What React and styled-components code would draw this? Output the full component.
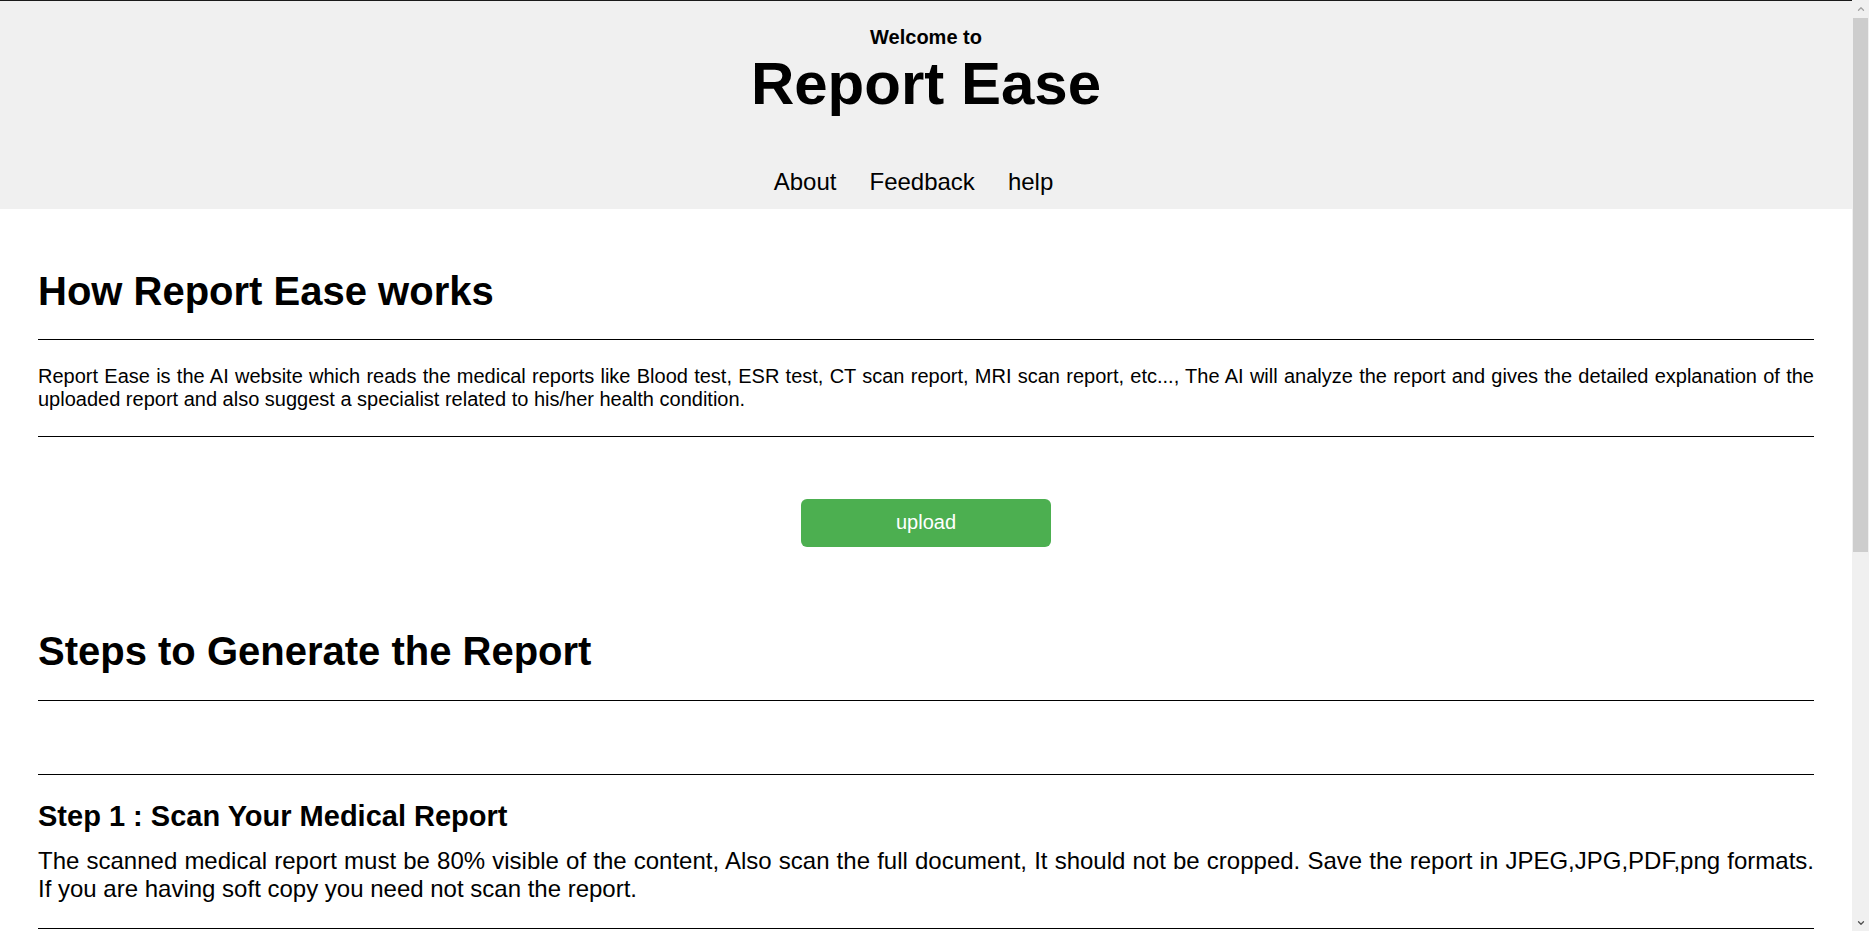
import React from 'react';
import styled, { createGlobalStyle } from 'styled-components';
import { ChevronUp, ChevronDown } from 'lucide-react';

const GlobalStyle = createGlobalStyle`
  html, body {
    margin: 0;
    padding: 0;
    background: #fff;
    font-family: "Liberation Sans", Arial, sans-serif;
    color: #000;
  }
  body {
    padding-right: 17px;
  }
`;

const steps = [
  {
    title: 'Step 1 : Scan Your Medical Report',
    text: 'The scanned medical report must be 80% visible of the content, Also scan the full document, It should not be cropped. Save the report in JPEG,JPG,PDF,png formats. If you are having soft copy you need not scan the report.',
  },
  {
    title: 'Step 2 : Upload the Report',
    text: 'Click the upload button and choose the scanned report or the soft copy from your device. Wait until the report is uploaded completely.',
  },
  {
    title: 'Step 3 : Get the Explanation',
    text: 'The AI will read the uploaded report and gives the detailed explanation of the report along with a specialist suggestion related to your health condition.',
  },
];

const App = () => {
  return (
    <Page>
      <GlobalStyle />
      <Header>
        <Header.Welcome>Welcome to</Header.Welcome>
        <Header.Title>Report Ease</Header.Title>
        <Nav>
          <Nav.Link href="#">About</Nav.Link>
          <Nav.Link href="#">Feedback</Nav.Link>
          <Nav.Link href="#">help</Nav.Link>
        </Nav>
      </Header>

      <Main>
        <SectionTitle>How Report Ease works</SectionTitle>
        <Rule top={25} />
        <Text top={25} size={20}>
          Report Ease is the AI website which reads the medical reports like Blood test, ESR test, CT scan report, MRI scan report, etc..., The AI will analyze the report and gives the detailed explanation of the uploaded report and also suggest a specialist related to his/her health condition.
        </Text>
        <Rule top={25} />

        <UploadButton>upload</UploadButton>

        <SectionTitle top={81}>Steps to Generate the Report</SectionTitle>
        <Rule top={26} />
        <Rule top={73} />

        {steps.map((s) => (
          <Step key={s.title}>
            <Step.Title>{s.title}</Step.Title>
            <Text top={14} size={24}>{s.text}</Text>
            <Rule top={26} />
          </Step>
        ))}
      </Main>

      <ScrollBar>
        <ScrollBar.Arrow>
          <ChevronUp size={10} strokeWidth={3} color="#a3a3a3" />
        </ScrollBar.Arrow>
        <ScrollBar.Track>
          <ScrollBar.Thumb />
        </ScrollBar.Track>
        <ScrollBar.Arrow>
          <ChevronDown size={10} strokeWidth={3} color="#505050" />
        </ScrollBar.Arrow>
      </ScrollBar>
    </Page>
  );
};

const Page = styled.div`
  min-height: 100vh;
`;

const Header = styled.header`
  background: #f0f0f0;
  border-top: 1px solid #1a1a1a;
  padding: 25px 0 13px;
  display: flex;
  flex-direction: column;
  align-items: center;
`;

Header.Welcome = styled.h3`
  margin: 0;
  font-size: 20px;
  font-weight: bold;
  line-height: 23px;
`;

Header.Title = styled.h1`
  margin: 0;
  font-size: 60px;
  font-weight: bold;
  line-height: 69px;
`;

const Nav = styled.nav`
  display: flex;
  gap: 33px;
  margin-top: 50px;
  padding-right: 25px;
`;

Nav.Link = styled.a`
  font-size: 24px;
  color: #000;
  text-decoration: none;
  line-height: 28px;
`;

const Main = styled.main`
  display: flex;
  flex-direction: column;
  padding: 59px 38px 330px;
`;

const SectionTitle = styled.h2`
  margin: ${({ top }) => (top ? `${top}px` : '0')} 0 0;
  font-size: 40px;
  font-weight: bold;
  line-height: 46px;
`;

const Rule = styled.div`
  margin-top: ${({ top }) => top}px;
  border-top: 1px solid #000;
`;

const Text = styled.p`
  margin: ${({ top }) => top}px 0 0;
  font-size: ${({ size }) => size}px;
  line-height: 1.149;
  text-align: justify;
`;

const UploadButton = styled.button`
  align-self: center;
  margin-top: 62px;
  width: 250px;
  height: 48px;
  border: none;
  border-radius: 6px;
  background: #4caf50;
  color: #fff;
  font-family: "Liberation Sans", Arial, sans-serif;
  font-size: 20px;
  cursor: pointer;
`;

const Step = styled.section`
  display: flex;
  flex-direction: column;
`;

Step.Title = styled.h3`
  margin: 25px 0 0;
  font-size: 29px;
  font-weight: bold;
  line-height: 33px;
`;

/* fake classic scrollbar, sits over the right edge of the viewport */
const ScrollBar = styled.div`
  position: fixed;
  top: 0;
  right: 0;
  width: 17px;
  height: 100vh;
  background: #f0f0f0;
  display: flex;
  flex-direction: column;
`;

ScrollBar.Arrow = styled.div`
  height: 17px;
  display: flex;
  align-items: center;
  justify-content: center;
  flex-shrink: 0;
`;

ScrollBar.Track = styled.div`
  flex: 1;
  padding: 1px 1px 0;
`;

ScrollBar.Thumb = styled.div`
  height: 534px;
  background: #cdcdcd;
`;

export default App;
